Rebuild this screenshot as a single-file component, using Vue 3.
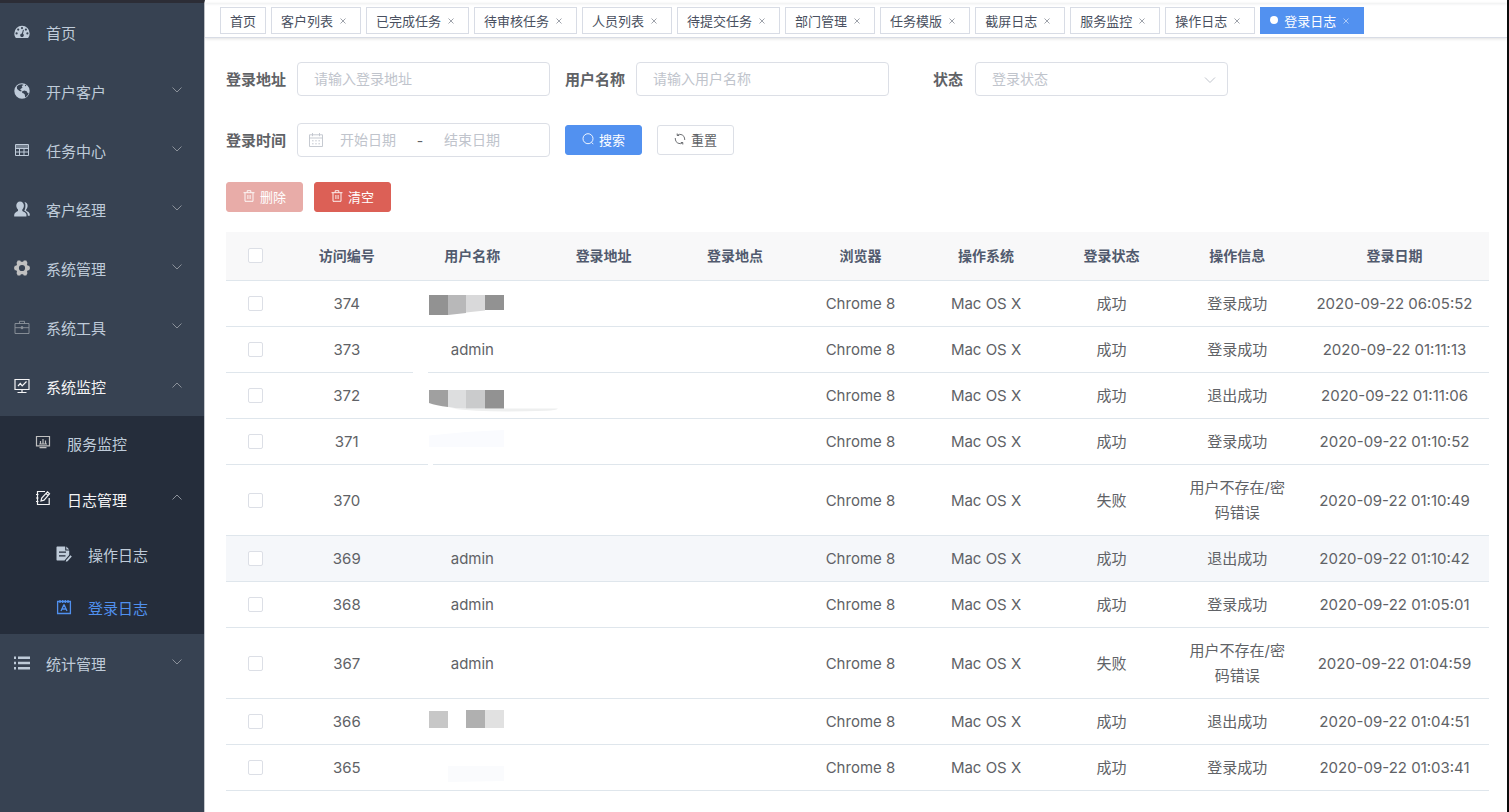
<template>
  <div class="layout">
    <aside class="sidebar">
      <nav>
        <ul class="menu">
          <li v-for="item in menu" :key="item.title">
            <component
              :is="item.arrow ? 'button' : 'a'"
              class="menu_item"
              :class="['level-' + item.level, { 'opened': item.arrow === 'up', 'current': item.current }]"
              :href="item.arrow ? null : '#'"
              :type="item.arrow ? 'button' : null"
            >
              <svg class="menu_icon" :class="item.tone" viewBox="0 0 16 16" v-html="icons[item.icon]"></svg>
              <span>{{ item.title }}</span>
              <svg v-if="item.arrow" class="menu_arrow" :class="item.arrow" viewBox="0 0 10 10">
                <path d="M0.5 2.5 5 7 9.5 2.5" fill="none" stroke="currentColor" />
              </svg>
            </component>
          </li>
        </ul>
      </nav>
    </aside>

    <main class="main">
      <div class="navbar"></div>
      <nav class="tags">
        <div v-for="tag in tags" :key="tag" class="tag" :class="{ 'active': tag === activeTag }">
          <a href="#">{{ tag }}</a>
          <button v-if="tag !== '首页'" type="button" class="tag_close" :aria-label="'关闭' + tag">
            <svg viewBox="0 0 6 6"><path d="M0.5 0.5 5.5 5.5M5.5 0.5 0.5 5.5" stroke="currentColor" stroke-width="0.7" /></svg>
          </button>
        </div>
      </nav>

      <div class="content">
        <form class="search" @submit.prevent>
          <div class="field">
            <label for="ipaddr">登录地址</label>
            <input id="ipaddr" v-model="query.ipaddr" class="control" type="text" placeholder="请输入登录地址">
          </div>
          <div class="field">
            <label for="userName">用户名称</label>
            <input id="userName" v-model="query.userName" class="control" type="text" placeholder="请输入用户名称">
          </div>
          <div class="field">
            <label for="status">状态</label>
            <div class="select">
              <select id="status" v-model="query.status" class="control">
                <option value="">登录状态</option>
                <option value="0">成功</option>
                <option value="1">失败</option>
              </select>
              <svg viewBox="0 0 12 12"><path d="M1 3.5 6 8.5 11 3.5" fill="none" stroke="currentColor" /></svg>
            </div>
          </div>
          <div class="field">
            <label for="beginTime">登录时间</label>
            <div class="control range">
              <svg viewBox="0 0 16 16" fill="none" stroke="currentColor" stroke-width="0.9">
                <path d="M1.5 2.8h13v11.7h-13zM1.5 6h13M4.5 1v3.2M11.5 1v3.2" />
                <path d="M4 8.8h1.6M7.2 8.8h1.6M10.4 8.8H12M4 11.8h1.6M7.2 11.8h1.6M10.4 11.8H12" />
              </svg>
              <input id="beginTime" v-model="query.beginTime" type="text" placeholder="开始日期">
              <span>-</span>
              <input v-model="query.endTime" type="text" placeholder="结束日期" aria-label="结束日期">
            </div>
          </div>
          <div class="field actions">
            <button type="submit" class="btn primary">
              <svg viewBox="0 0 12 12" v-html="icons.search"></svg>搜索
            </button>
            <button type="reset" class="btn">
              <svg viewBox="0 0 12 12" v-html="icons.refresh"></svg>重置
            </button>
          </div>
        </form>

        <div class="toolbar">
          <button type="button" class="btn danger" disabled>
            <svg viewBox="0 0 12 12" v-html="icons.trash"></svg>删除
          </button>
          <button type="button" class="btn danger">
            <svg viewBox="0 0 12 12" v-html="icons.trash"></svg>清空
          </button>
        </div>

        <table class="table">
          <colgroup>
            <col class="col-check">
            <col>
            <col>
            <col class="col-addr">
            <col span="5">
            <col class="col-date">
          </colgroup>
          <thead>
            <tr>
              <th><input type="checkbox" aria-label="全选"></th>
              <th v-for="name in columns" :key="name">{{ name }}</th>
            </tr>
          </thead>
          <tbody>
            <tr v-for="row in rows" :key="row.id" :class="{ 'hover': row.id === 369 }">
              <td><input type="checkbox" :aria-label="'选择' + row.id"></td>
              <td>{{ row.id }}</td>
              <td>
                {{ row.user }}
                <svg v-if="masks[row.id]" class="mask" width="126" height="46" v-html="masks[row.id]"></svg>
              </td>
              <td></td>
              <td></td>
              <td>Chrome 8</td>
              <td>Mac OS X</td>
              <td>{{ row.status }}</td>
              <td>{{ row.msg }}</td>
              <td class="date">{{ row.time }}</td>
            </tr>
          </tbody>
        </table>
      </div>
    </main>
  </div>
</template>

<script setup>
import { reactive, ref } from 'vue'

const query = reactive({
  ipaddr: '',
  userName: '',
  status: '',
  beginTime: '',
  endTime: ''
})

const activeTag = ref('登录日志')
const tags = [
  '首页', '客户列表', '已完成任务', '待审核任务', '人员列表', '待提交任务',
  '部门管理', '任务模版', '截屏日志', '服务监控', '操作日志', '登录日志'
]

const menu = [
  { title: '首页', icon: 'dashboard', level: 1 },
  { title: '开户客户', icon: 'globe', level: 1, arrow: 'down' },
  { title: '任务中心', icon: 'table', level: 1, arrow: 'down' },
  { title: '客户经理', icon: 'peoples', level: 1, arrow: 'down' },
  { title: '系统管理', icon: 'system', level: 1, arrow: 'down', tone: 'grey' },
  { title: '系统工具', icon: 'tool', level: 1, arrow: 'down', tone: 'dim' },
  { title: '系统监控', icon: 'monitor', level: 1, arrow: 'up' },
  { title: '服务监控', icon: 'server', level: 2, tone: 'grey' },
  { title: '日志管理', icon: 'log', level: 2, arrow: 'up' },
  { title: '操作日志', icon: 'form', level: 3 },
  { title: '登录日志', icon: 'logininfor', level: 3, current: true },
  { title: '统计管理', icon: 'list', level: 1, arrow: 'down' }
]

const columns = ['访问编号', '用户名称', '登录地址', '登录地点', '浏览器', '操作系统', '登录状态', '操作信息', '登录日期']

const rows = [
  { id: 374, user: '', status: '成功', msg: '登录成功', time: '2020-09-22 06:05:52' },
  { id: 373, user: 'admin', status: '成功', msg: '登录成功', time: '2020-09-22 01:11:13' },
  { id: 372, user: '', status: '成功', msg: '退出成功', time: '2020-09-22 01:11:06' },
  { id: 371, user: '', status: '成功', msg: '登录成功', time: '2020-09-22 01:10:52' },
  { id: 370, user: '', status: '失败', msg: '用户不存在/密码错误', time: '2020-09-22 01:10:49' },
  { id: 369, user: 'admin', status: '成功', msg: '退出成功', time: '2020-09-22 01:10:42' },
  { id: 368, user: 'admin', status: '成功', msg: '登录成功', time: '2020-09-22 01:05:01' },
  { id: 367, user: 'admin', status: '失败', msg: '用户不存在/密码错误', time: '2020-09-22 01:04:59' },
  { id: 366, user: '', status: '成功', msg: '退出成功', time: '2020-09-22 01:04:51' },
  { id: 365, user: '', status: '成功', msg: '登录成功', time: '2020-09-22 01:03:41' }
]

// Mosaic blocks laid over hidden user names, in cell coordinates
const masks = {
  374: '<path fill="#929292" d="M19 14h19v20H19z"/><path fill="#b8b8b9" d="M38 14h18v18l-18 2z"/><path fill="#d9d9da" d="M56 14h19v15.500l-19 2z"/><path fill="#929292" d="M75 14h19v15H75z"/>',
  373: '<path fill="#fff" d="M3 44h15v3H3z"/>',
  372: '<path fill="#eeefef" d="M41 35.500h107q-2 2-12 2.200Q74 40 41 35.500z"/><path fill="#a0a0a0" d="M19 17h19v17q-12-1.500-19-4z"/><path fill="#dddedf" d="M38 17h18v18.500q-10 0-18-1.500z"/><path fill="#cacbcc" d="M56 17h19v18.500H56z"/><path fill="#929292" d="M75 17h19v18.500H75z"/>',
  371: '<path fill="#fafbfe" d="M19 16.500 56 13l38-2v17H19z"/><path fill="#fff" d="M18 44h5v3h-5z"/>',
  366: '<path fill="#c7c7c7" d="M19 12h19v17H19z"/><path fill="#b0b0b0" d="M56 11h19v18H56z"/><path fill="#e1e1e1" d="M75 11h19v18H75z"/>',
  365: '<path fill="#fafbfd" d="M38 21h56v15l-56 1z"/>'
}

const icons = {
  dashboard: '<path fill="currentColor" fill-rule="evenodd" d="M8 1.700A7.700 7.700 0 0 0 .3 9.400c0 1.700.6 3.300 1.600 4.600h12.200a7.700 7.700 0 0 0 1.600-4.600A7.700 7.700 0 0 0 8 1.700zM2.600 8.300a1.100 1.100 0 1 1 0 2.200 1.100 1.100 0 0 1 0-2.200zM4.200 4.500a1.100 1.100 0 1 1 0 2.200 1.100 1.100 0 0 1 0-2.200zM8 3a1.100 1.100 0 1 1 0 2.200A1.100 1.100 0 0 1 8 3zM11.900 4.500a1.100 1.100 0 1 1 0 2.200 1.100 1.100 0 0 1 0-2.200zM13.400 8.300a1.100 1.100 0 1 1 0 2.200 1.100 1.100 0 0 1 0-2.200zM9 5.800l.9.300-.9 3.700a1.800 1.800 0 1 1-1.100-.3z"/>',
  globe: '<path fill="currentColor" fill-rule="evenodd" d="M8 .3a7.700 7.700 0 1 0 0 15.400A7.700 7.700 0 0 0 8 .3zM2.800 3.400 5 1.700l3-.4 1.600.6-1.200.7-.7 1.500 1 .4-2.100 1.400-.4 1.200 1.300.2-.2 1.100-1.800-.5-2.400-2zM11.200 1.700l1.200.7-.7.9-.9-.6zM8.200 8.200l2.300-.6 2.200.6.700 1.500 1.300.3-.8 1.900-1.900 2-.9.300-.3-2.600-1.400-1.300-1.200-.3z"/>',
  table: '<path fill="none" stroke="currentColor" d="M1.500 2.500h13v11h-13zM1.500 6.500h13M1.500 10h13M5.500 6.500v7M10 6.500v7"/><path fill="currentColor" opacity=".45" d="M2 3h12v3H2z"/>',
  peoples: '<path fill="currentColor" d="M6 .6c2.300 0 3.900 1.700 3.900 4 0 1.700-.6 3.100-1.600 4v1.300c1.800.8 3.700 1.700 4 3.100.2.700.2 1.500.1 2.400H.2c-.1-1 0-2 .3-2.700.5-1.300 2.100-2 3.500-2.800V8.600c-1-.9-1.700-2.300-1.700-4C2.300 2.300 3.800.6 6 .6z"/><path fill="currentColor" d="M10.500 1c2 .3 3.100 1.700 3.100 3.700 0 1.600-.5 2.700-1.400 3.600v1.400c1.800.8 3.100 1.800 3.500 3.100.1.600.1 1.200 0 1.900h-1.800c-.1-2.600-1.500-4-3.700-5.100.8-1.100 1.200-2.700 1.200-4.400A6 6 0 0 0 10.500 1z"/>',
  system: '<path fill="currentColor" fill-rule="evenodd" d="M3.700.5h2.500l.7 1.300h2.200L9.800.5h2.500L13.500 3l-.6 1.300.9 1.500h1.400L16 8l-.8 2.200h-1.400l-.9 1.500.6 1.300-1.200 2.500H9.800l-.7-1.300H6.900l-.7 1.300H3.700L2.500 13l.6-1.300-.9-1.500H.8L0 8l.8-2.200h1.400l.9-1.500L2.500 3zM8 4.900a3.100 3.100 0 1 0 0 6.200 3.100 3.100 0 0 0 0-6.200z"/>',
  tool: '<g fill="none" stroke="currentColor" stroke-width="0.9"><path d="M1 4.500h14v10H1zM5.500 4.500V2.300h5v2.200M1 8.700h6M9 8.700h6"/><path fill="currentColor" d="M7.300 7.700h1.400v2H7.300z"/></g>',
  monitor: '<path fill="none" stroke="currentColor" stroke-width="1.200" d="M1 1.500h14v10H1zM8 11.500v3M3.500 14.500h9M4 8l2.300-2.500 1.900 2.300L12.500 3.500"/>',
  server: '<path fill="none" stroke="currentColor" stroke-width="1.200" d="M1.500 2.500h13v9.300h-13zM4.500 13.700h7M5.500 7v3M8 5v5M10.500 6.500V10M4.200 10H12"/>',
  log: '<g fill="none" stroke="currentColor" stroke-width="1.200"><path d="M10 1.500H2.500v13h11.700V8M1 4.500h2.500M1 8h2.500M1 11.500h2.500"/><path d="m6 11 .7-3 5.800-6.200 2 2L9 10.200zM11 3.300l2 2"/></g>',
  form: '<path fill="currentColor" fill-rule="evenodd" d="M1.500.5h7.700v4h4V9l-4.700 5.500h-7c-.7 0-1-.3-1-1v-12c0-.7.300-1 1-1zM3 5.500v1.300h7V5.500zM3 9.300v1.300h6.500V9.300z"/><path fill="currentColor" d="M10.300.5 13.200 3.400h-2.900zM14.500 9.300l1.300 1.200-4.200 4.700-1.900.5.500-1.800z"/>',
  logininfor: '<path fill="none" stroke="currentColor" stroke-width="1.300" d="M1.600 2.500h12.800v12H1.600zM4 1v3M6.700 1v3M9.300 1v3M12 1v3M5 12l2.800-6h.4L11 12M6 10h4"/>',
  list: '<path fill="currentColor" d="M0 1.500h2v2.500H0zM4 1.500h12v2.500H4zM0 6.800h2v2.500H0zM4 6.800h12v2.500H4zM0 12h2v2.500H0zM4 12h12v2.500H4z"/>',
  search: '<path fill="none" stroke="currentColor" stroke-width="0.900" d="M6 .7a5 5 0 1 1 0 10 5 5 0 0 1 0-10zM9.600 9.400l1.700 1.800"/>',
  refresh: '<path fill="none" stroke="currentColor" stroke-width="0.900" d="M3.300 2.200A4.700 4.700 0 0 1 10.700 6v1M8.700 9.800A4.700 4.700 0 0 1 1.300 6V5M3.200.5v2h2M8.800 11.500v-2h-2"/>',
  trash: '<path fill="none" stroke="currentColor" stroke-width="0.900" d="M.5 2.700h11M2 2.700v8.600h8V2.700M4.200 2.500V.7h3.600v1.800M4.900 5v4M7.100 5v4"/>'
}
</script>

<style>
body {
  margin: 0;
  background: #fff;
}
</style>

<style scoped>
* {
  box-sizing: border-box;
}

.layout {
  display: flex;
  min-height: 100vh;
  font-family: Inter, "Noto Sans CJK SC", sans-serif;
  font-size: 15px;
  color: #606266;
}

button, input, select {
  font-family: inherit;
}

a {
  color: inherit;
  text-decoration: none;
}

/* Sidebar */
.sidebar {
  flex: none;
  width: 205px;
  background: #374252;
  border-top: 3px solid #2c2d36;
  border-right: 1px solid #c5c8cd;
}

.menu {
  list-style: none;
  margin: 0;
  padding: 0;
}

.menu_item {
  display: flex;
  align-items: center;
  width: 100%;
  height: 59px;
  padding: 0 22px 0 14px;
  border: 0;
  background: none;
  color: #bfcbd9;
  font-size: 15px;
  text-align: left;
  cursor: pointer;
}

.menu_item.level-2 {
  height: 56px;
  padding-bottom: 2px;
  padding-left: 35px;
  background: #252d3b;
}

.menu_item.level-3 {
  height: 53px;
  padding-left: 56px;
  background: #252d3b;
}

.menu_item.opened {
  color: #f4f4f5;
}

.menu_item.current {
  color: #5090ee;
}

.menu_icon {
  width: 16px;
  height: 16px;
  margin-right: 16px;
  margin-bottom: 2px;
}

.menu_icon.grey {
  color: #c0c0c0;
}

.menu_icon.dim {
  color: #8f959d;
}

.menu_arrow {
  width: 10px;
  height: 10px;
  margin-left: auto;
  margin-bottom: 4px;
  color: #8b919a;
}

.menu_arrow.up {
  transform: rotate(180deg);
}

/* Tags */
.main {
  flex: 1;
  min-width: 0;
  border-right: 2px solid #0c0c0c;
}

.navbar {
  height: 3px;
  box-shadow: 0 1px 3px rgba(0, 21, 41, 0.08);
}

.tags {
  display: flex;
  align-items: center;
  gap: 5px;
  height: 35px;
  padding: 0 15px;
  border-bottom: 1px solid #d8dce5;
  box-shadow: 0 1px 3px rgba(0, 0, 0, 0.12);
}

.tag {
  display: flex;
  align-items: center;
  flex: none;
  height: 27px;
  padding: 0 9px;
  border: 1px solid #d8dce5;
  color: #495060;
  font-size: 13px;
}

.tag.active {
  background: #5291f0;
  border-color: #5291f0;
  color: #fff;
}

.tag.active::before {
  content: "";
  width: 8px;
  height: 8px;
  margin-right: 6px;
  border-radius: 50%;
  background: #fff;
}

.tag_close {
  display: flex;
  align-items: center;
  justify-content: center;
  width: 16px;
  height: 16px;
  margin: 2px 0 0 2px;
  padding: 0;
  border: 0;
  background: none;
  color: inherit;
  opacity: 0.75;
  cursor: pointer;
}

.tag_close svg {
  width: 6px;
  height: 6px;
}

/* Search form */
.content {
  padding: 24px 18px 20px 21px;
}

.search {
  display: flex;
  flex-wrap: wrap;
  gap: 27px 15px;
}

.field {
  display: flex;
  align-items: center;
  height: 34px;
}

.field label {
  width: 71px;
  padding: 0 12px 2px 0;
  text-align: right;
  font-weight: 700;
  white-space: nowrap;
}

.control {
  width: 253px;
  height: 34px;
  padding: 0 16px 2px;
  border: 1px solid #dcdfe6;
  border-radius: 4px;
  background: #fff;
  color: #606266;
  font-size: 14px;
  outline: none;
}

input::placeholder {
  color: #c0c4cc;
}

.select {
  position: relative;
}

.select .control {
  appearance: none;
  color: #c0c4cc;
}

.select svg {
  position: absolute;
  top: 12px;
  right: 12px;
  width: 12px;
  height: 12px;
  color: #c0c4cc;
  pointer-events: none;
}

.range {
  display: flex;
  align-items: center;
  padding: 0 10px;
}

.range svg {
  width: 16px;
  height: 16px;
  color: #c0c4cc;
}

.range input {
  width: 88px;
  padding: 0 0 2px;
  border: 0;
  outline: none;
  text-align: center;
  font-size: 14px;
}

.range span {
  width: 16px;
  text-align: center;
}

.actions {
  gap: 15px;
}

.btn {
  display: flex;
  align-items: center;
  justify-content: center;
  gap: 5px;
  width: 77px;
  height: 30px;
  padding: 0 0 2px;
  border: 1px solid #dcdfe6;
  border-radius: 3px;
  background: #fff;
  color: #606266;
  font-size: 13px;
  cursor: pointer;
}

.btn svg {
  width: 12px;
  height: 12px;
}

.btn.primary {
  background: #5291f0;
  border-color: #5291f0;
  color: #fff;
}

.btn.danger {
  background: #dc6056;
  border-color: #dc6056;
  color: #fff;
}

.btn.danger:disabled {
  background: #e8aca8;
  border-color: #e8aca8;
  cursor: not-allowed;
}

.toolbar {
  display: flex;
  gap: 11px;
  margin: 25px 0 20px;
}

/* Table */
.table {
  width: 100%;
  table-layout: fixed;
  border-collapse: separate;
  border-spacing: 0;
  line-height: 25px;
  text-align: center;
}

.col-check {
  width: 58px;
}

.col-addr {
  width: 137px;
}

.col-date {
  width: 189px;
}

.table th {
  height: 49px;
  padding: 0 10px 2px;
  background: #f8f8f9;
  border-bottom: 1px solid #dfe6ec;
  color: #515a6e;
  font-size: 14px;
  font-weight: 700;
}

.table td {
  position: relative;
  height: 46px;
  padding: 10px;
  border-bottom: 1px solid #dfe6ec;
}

.table .date {
  white-space: nowrap;
}

.table .hover td {
  background: #f5f7fa;
}

.table input {
  appearance: none;
  display: block;
  width: 15px;
  height: 15px;
  margin: 0 auto;
  border: 1px solid #dcdfe6;
  border-radius: 2px;
  background: #fff;
}

.table input:checked {
  background: #5291f0;
  border-color: #5291f0;
}

.mask {
  position: absolute;
  top: 0;
  left: 0;
  z-index: 1;
  overflow: visible;
}
</style>
